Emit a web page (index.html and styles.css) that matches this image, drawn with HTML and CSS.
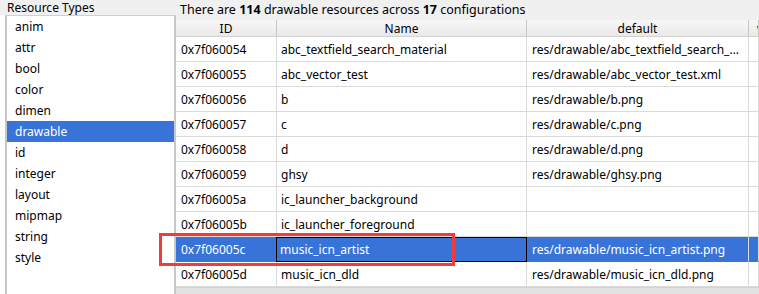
FILE: index.html
```html
<!DOCTYPE html>
<html>
<head>
<meta charset="utf-8">
<link rel="stylesheet" href="styles.css">
</head>
<body>
<div class="app">
  <aside class="types">
    <div class="types-title">Resource Types</div>
    <ul class="types-list">
      <li>anim</li>
      <li>attr</li>
      <li>bool</li>
      <li>color</li>
      <li>dimen</li>
      <li class="sel">drawable</li>
      <li>id</li>
      <li>integer</li>
      <li>layout</li>
      <li>mipmap</li>
      <li>string</li>
      <li>style</li>
    </ul>
  </aside>
  <main class="res">
    <div class="info">There are <b>114</b> drawable resources across <b>17</b> configurations</div>
    <div class="grid">
      <div class="row head">
        <div class="c">ID</div><div class="c">Name</div><div class="c">default</div><div class="c extra">v</div>
      </div>
      <div class="row"><div class="c">0x7f060054</div><div class="c">abc_textfield_search_material</div><div class="c">res/drawable/abc_textfield_search_…</div><div class="c"></div></div>
      <div class="row"><div class="c">0x7f060055</div><div class="c">abc_vector_test</div><div class="c">res/drawable/abc_vector_test.xml</div><div class="c"></div></div>
      <div class="row"><div class="c">0x7f060056</div><div class="c">b</div><div class="c">res/drawable/b.png</div><div class="c"></div></div>
      <div class="row"><div class="c">0x7f060057</div><div class="c">c</div><div class="c">res/drawable/c.png</div><div class="c"></div></div>
      <div class="row"><div class="c">0x7f060058</div><div class="c">d</div><div class="c">res/drawable/d.png</div><div class="c"></div></div>
      <div class="row"><div class="c">0x7f060059</div><div class="c">ghsy</div><div class="c">res/drawable/ghsy.png</div><div class="c"></div></div>
      <div class="row"><div class="c">0x7f06005a</div><div class="c">ic_launcher_background</div><div class="c"></div><div class="c"></div></div>
      <div class="row"><div class="c">0x7f06005b</div><div class="c">ic_launcher_foreground</div><div class="c"></div><div class="c"></div></div>
      <div class="row sel"><div class="c">0x7f06005c</div><div class="c focus">music_icn_artist</div><div class="c">res/drawable/music_icn_artist.png</div><div class="c"></div></div>
      <div class="row"><div class="c">0x7f06005d</div><div class="c">music_icn_dld</div><div class="c">res/drawable/music_icn_dld.png</div><div class="c"></div></div>
      <div class="fill"></div>
    </div>
  </main>
  <div class="mark"></div>
</div>
</body>
</html>
```
FILE: styles.css
```css
html, body {
  margin: 0;
  padding: 0;
  background: #f0f0f0;
}
body {
  font-family: "Noto Sans", "Open Sans", sans-serif;
  font-size: 12px;
  color: #000;
  overflow: hidden;
}
.app {
  position: relative;
  display: flex;
  width: 759px;
  height: 294px;
  overflow: hidden;
}
.types {
  width: 176px;
  flex: none;
  display: flex;
  flex-direction: column;
  background: #fff;
}
.types-title {
  height: 15px;
  line-height: 16px;
  padding-left: 7px;
  background: #f0f0f0;
  white-space: nowrap;
}
.types-list {
  list-style: none;
  margin: 0 0 0 5px;
  padding: 0;
  flex: 1;
  border-left: 2px solid #c6c6c6;
  border-right: 2px solid #c8c8c8;
  border-top: 1px solid #d0d0d0;
  background: #fff;
}
.types-list li {
  height: 21px;
  line-height: 22px;
  padding-left: 8px;
}
.types-list li.sel {
  background: #3874d8;
  color: #fff;
}
.res {
  flex: 1;
  display: flex;
  flex-direction: column;
  min-width: 0;
}
.info {
  height: 20px;
  line-height: 19px;
  padding-left: 4px;
  font-size: 12.5px;
  white-space: nowrap;
}
.grid {
  flex: 1;
  display: flex;
  flex-direction: column;
  background: #fff;
}
.row {
  display: grid;
  grid-template-columns: 101px 250px 222px 1fr;
  height: 25px;
  flex: none;
}
.row .c {
  border-right: 1px solid #dadada;
  border-bottom: 1px solid #dadada;
  padding-left: 5px;
  line-height: 25px;
  white-space: nowrap;
  overflow: hidden;
}
.row .c:nth-child(2) { padding-left: 4px; }
.row.head {
  height: 17px;
  background: linear-gradient(#f7f7f7, #e8e8e8);
}
.row.head .c {
  text-align: center;
  padding-left: 0;
  line-height: 17px;
  border-right: 1px solid #c4cabe;
  border-bottom: 1px solid #d2d2d2;
}
.row.head .c.extra {
  text-align: left;
  padding-left: 8px;
}
.row.sel {
  background: #3874d8;
  color: #fff;
}
.row.sel .c {
  border-bottom-color: #3874d8;
}
.row.sel .c.focus {
  border: 1px solid #000;
  line-height: 23px;
  padding-left: 3px;
  margin-left: -1px;
}
.fill {
  flex: 1;
  background: #e2e2e2;
  border-top: 1px solid #d4d4d4;
}
.mark {
  position: absolute;
  left: 159px;
  top: 233px;
  width: 296px;
  height: 33px;
  box-sizing: border-box;
  border: 3px solid #f23b3b;
}
```
